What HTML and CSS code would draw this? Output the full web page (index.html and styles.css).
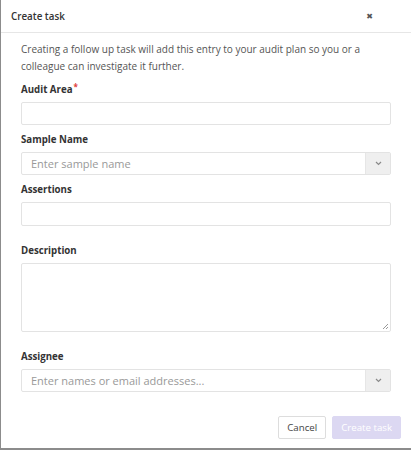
FILE: index.html
```html
<!DOCTYPE html>
<html>
<head>
<meta charset="utf-8">
<link rel="stylesheet" href="styles.css">
</head>
<body>
<div class="modal">
  <div class="header">
    <span class="title">Create task</span>
    <span class="close">&#x2716;</span>
  </div>
  <div class="body">
    <p class="intro">Creating a follow up task will add this entry to your audit plan so you or a colleague can investigate it further.</p>
    <div class="field f-audit">
      <label class="label">Audit Area<span class="req">*</span></label>
      <div class="input"></div>
    </div>
    <div class="field f-sample">
      <label class="label">Sample Name</label>
      <div class="input select">
        <span class="ph">Enter sample name</span>
        <span class="chev"><svg width="7" height="5" viewBox="0 0 7 5"><path d="M1 1l2.5 2.5L6 1" fill="none" stroke="#8a8a8a" stroke-width="1.2"/></svg></span>
      </div>
    </div>
    <div class="field f-assert">
      <label class="label">Assertions</label>
      <div class="input tall"></div>
    </div>
    <div class="field f-desc">
      <label class="label">Description</label>
      <div class="input textarea">
        <svg class="grip" width="7" height="7" viewBox="0 0 7 7"><path d="M6 1L1 6M6 4L4 6" stroke="#999" stroke-width="1"/></svg>
      </div>
    </div>
    <div class="field f-assignee">
      <label class="label">Assignee</label>
      <div class="input select">
        <span class="ph">Enter names or email addresses...</span>
        <span class="chev"><svg width="7" height="5" viewBox="0 0 7 5"><path d="M1 1l2.5 2.5L6 1" fill="none" stroke="#8a8a8a" stroke-width="1.2"/></svg></span>
      </div>
    </div>
  </div>
  <div class="footer">
    <button class="btn cancel">Cancel</button>
    <button class="btn primary">Create task</button>
  </div>
</div>
</body>
</html>
```
FILE: styles.css
```css
html, body {
  margin: 0;
  padding: 0;
  background: #fff;
}
body {
  font-family: "Open Sans", "Liberation Sans", sans-serif;
  color: #333;
}
.modal {
  width: 410px;
  height: 448px;
  border-left: 1px solid #8c8c8c;
  border-bottom: 2px solid #8c8c8c;
  background: #fff;
  display: flex;
  flex-direction: column;
}
.header {
  height: 32px;
  border-bottom: 1px solid #e6e6e6;
  display: flex;
  align-items: center;
  justify-content: space-between;
  padding: 0 38px 0 10px;
}
.title {
  font-size: 9.8px;
  font-weight: 600;
  color: #333;
}
.close {
  font-size: 8px;
  color: #555;
  font-family: "DejaVu Sans", sans-serif;
}
.body {
  padding: 8px 20px 0 20px;
  flex: 1;
}
.intro {
  margin: 0;
  font-size: 10px;
  line-height: 17px;
  color: #555;
}
.field {
  margin-top: 7px;
}
.f-audit { margin-top: 8px; }
.f-sample { margin-top: 8px; }
.f-assert { margin-top: 8px; }
.f-desc { margin-top: 18px; }
.f-assignee { margin-top: 18px; }
.label {
  display: block;
  font-size: 9.7px;
  font-weight: 700;
  color: #333;
  line-height: 14px;
  margin-bottom: 5px;
}
.req {
  color: #e0403a;
  font-size: 8px;
  vertical-align: top;
  margin-left: 1px;
  line-height: 8px;
}
.input {
  height: 21px;
  border: 1px solid #e3e3e3;
  border-radius: 2px;
  background: #fff;
  box-sizing: content-box;
  position: relative;
}
.tall {
  height: 22px;
}
.select {
  display: flex;
  align-items: center;
}
.ph {
  flex: 1;
  padding-left: 9px;
  font-size: 11px;
  color: #999;
}
.chev {
  width: 24px;
  height: 21px;
  background: #efefef;
  border-left: 1px solid #e6e6e6;
  display: flex;
  align-items: center;
  justify-content: center;
}
.textarea {
  height: 67px;
}
.grip {
  position: absolute;
  right: 1px;
  bottom: 1px;
}
.footer {
  display: flex;
  justify-content: flex-end;
  gap: 6px;
  padding: 0 10px 9px 0;
}
.btn {
  font-family: "Open Sans", "Liberation Sans", sans-serif;
  font-size: 9.7px;
  height: 23px;
  border-radius: 2px;
  padding: 0 8px;
}
.cancel {
  background: #fff;
  border: 1px solid #ddd;
  color: #444;
}
.primary {
  background: #dcd8f2;
  border: 1px solid #dcd8f2;
  color: #fff;
}
```
